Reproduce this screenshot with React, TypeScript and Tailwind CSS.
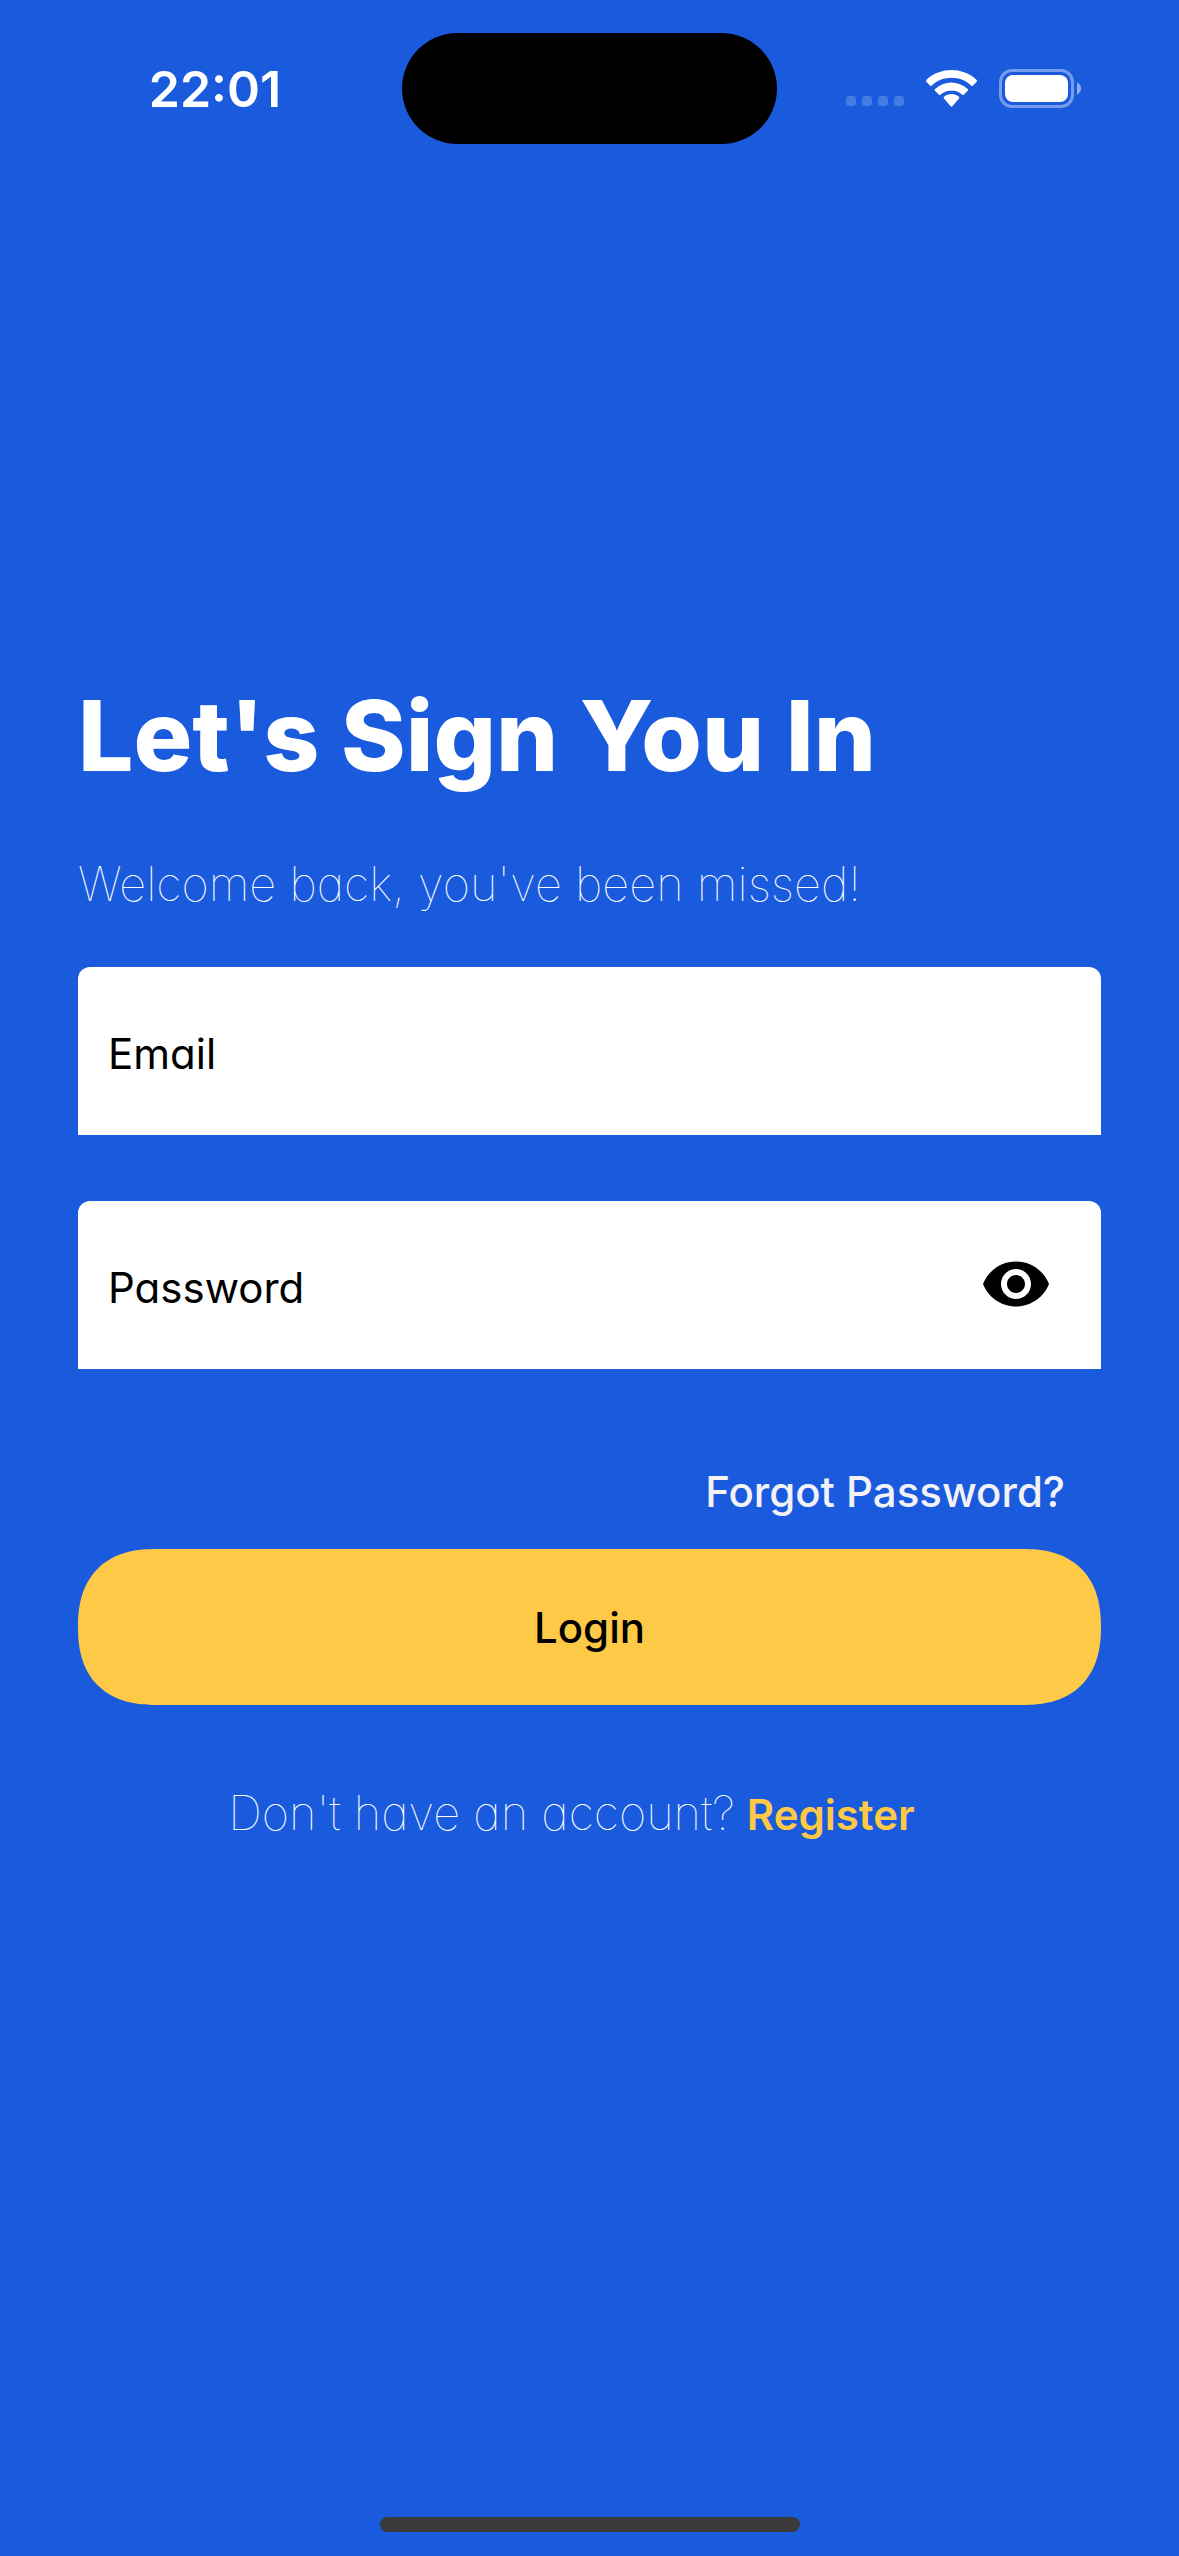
import { useState } from "react";
import { MdVisibility, MdVisibilityOff } from "react-icons/md";

function StatusBar() {
  return (
    <header className="grid h-[177px] grid-cols-[1fr_375px_1fr] items-center">
      <time className="pl-7 text-center text-[50px]/[60px] font-semibold">22:01</time>
      <div className="h-[111px] rounded-[56px] bg-black" aria-hidden="true" />
      <div className="flex items-center justify-end pr-[98px]" aria-hidden="true">
        <div className="mr-[22px] mt-6 flex gap-1.5">
          <i className="size-2.5 rounded-[3px] bg-white/20" />
          <i className="size-2.5 rounded-[3px] bg-white/20" />
          <i className="size-2.5 rounded-[3px] bg-white/20" />
          <i className="size-2.5 rounded-[3px] bg-white/20" />
        </div>
        <svg className="mr-[22px] h-[37px] w-[51px]" viewBox="0 0 17 12.3" fill="#fff">
          <path d="M8.5 2.6c2.5 0 4.8.9 6.6 2.6.1.1.4.1.5 0l1.3-1.3c.1-.1.1-.2.1-.3s0-.2-.1-.3C12.2-1.1 4.8-1.1.1 3.3c-.1.1-.1.2-.1.3s0 .2.1.3l1.3 1.3c.1.1.3.1.5 0C3.7 3.5 6 2.6 8.5 2.6z" />
          <path d="M8.5 6.8c1.3 0 2.6.5 3.6 1.4.1.1.4.1.5 0l1.3-1.3c.1-.1.1-.2.1-.3s0-.2-.1-.3c-3.1-2.9-7.8-2.9-10.9 0-.1.1-.1.2-.1.3s0 .2.1.3l1.3 1.3c.1.1.4.1.5 0 1.1-.9 2.4-1.4 3.8-1.4z" />
          <path d="M11 9.5c.1-.1.1-.2.1-.3s0-.2-.1-.3c-1.4-1.2-3.6-1.2-5 0-.1.1-.1.2-.1.3s0 .2.1.3l2.2 2.6c.1.1.2.1.3.1s.2 0 .3-.1L11 9.5z" />
        </svg>
        <svg className="h-[39px] w-[82px]" viewBox="0 0 82 39">
          <rect x="1.5" y="1.5" width="72" height="36" rx="11.5" fill="none" stroke="#fff" strokeOpacity="0.4" strokeWidth="3" />
          <rect x="6" y="6" width="63" height="27" rx="8" fill="#fff" />
          <path d="M78 13.5c2.4 1 4 3.300 4 6s-1.600 5-4 6z" fill="#fff" fillOpacity="0.5" />
        </svg>
      </div>
    </header>
  );
}

const field =
  "block h-[168px] w-full rounded-t-[12px] bg-white pl-[30px] pr-[140px] pt-1 text-[42px] text-black outline-none placeholder:text-black placeholder:opacity-100";

export default function App() {
  const [shown, setShown] = useState(false);
  const Eye = shown ? MdVisibilityOff : MdVisibility;

  return (
    <div className="flex min-h-screen flex-col bg-[#1a5bde] font-['Inter','Noto_Sans',sans-serif] text-white">
      <StatusBar />
      <main className="flex-1 px-[78px] pt-[498px]">
        <h1 className="text-[98px]/[122px] font-extrabold [font-feature-settings:'cv11']">Let's Sign You In</h1>
        <p className="mt-[55px] text-[47px]/[64px] font-thin [font-feature-settings:'cv11']">
          Welcome back, you've been missed!
        </p>
        <form className="mt-[51px]" onSubmit={(e) => e.preventDefault()}>
          <div className="flex flex-col gap-[66px] [font-feature-settings:'cv11']">
            <input className={field} type="email" aria-label="Email" placeholder="Email" />
            <div className="relative">
              <input className={field} type={shown ? "text" : "password"} aria-label="Password" placeholder="Password" />
              <button
                type="button"
                aria-label={shown ? "Hide password" : "Show password"}
                onClick={() => setShown(!shown)}
                className="absolute inset-y-0 right-[49px] flex items-center pb-0.5 text-black"
              >
                <Eye className="size-[72px]" />
              </button>
            </div>
          </div>
          <div className="flex justify-end pr-9 pt-[91px]">
            <a href="#forgot" className="text-[42px]/[64px] font-medium text-[#f2f2f7]">
              Forgot Password?
            </a>
          </div>
          <button
            type="submit"
            className="mt-[25px] block h-[156px] w-full rounded-[78px] bg-[#fec946] text-[42px] font-medium text-black [corner-shape:superellipse(1.25)]"
          >
            Login
          </button>
        </form>
        <p className="mt-[76px] flex items-baseline justify-center gap-3 pr-9 text-[42px]/[64px]">
          <span className="text-[47px]/[64px] font-thin [font-feature-settings:'cv11']">Don't have an account?</span>
          <a href="#register" className="font-semibold text-[#fec946]">
            Register
          </a>
        </p>
      </main>
      <div className="mx-auto mb-6 h-[15px] w-[420px] rounded-full bg-[#3a3a3a]" aria-hidden="true" />
    </div>
  );
}
